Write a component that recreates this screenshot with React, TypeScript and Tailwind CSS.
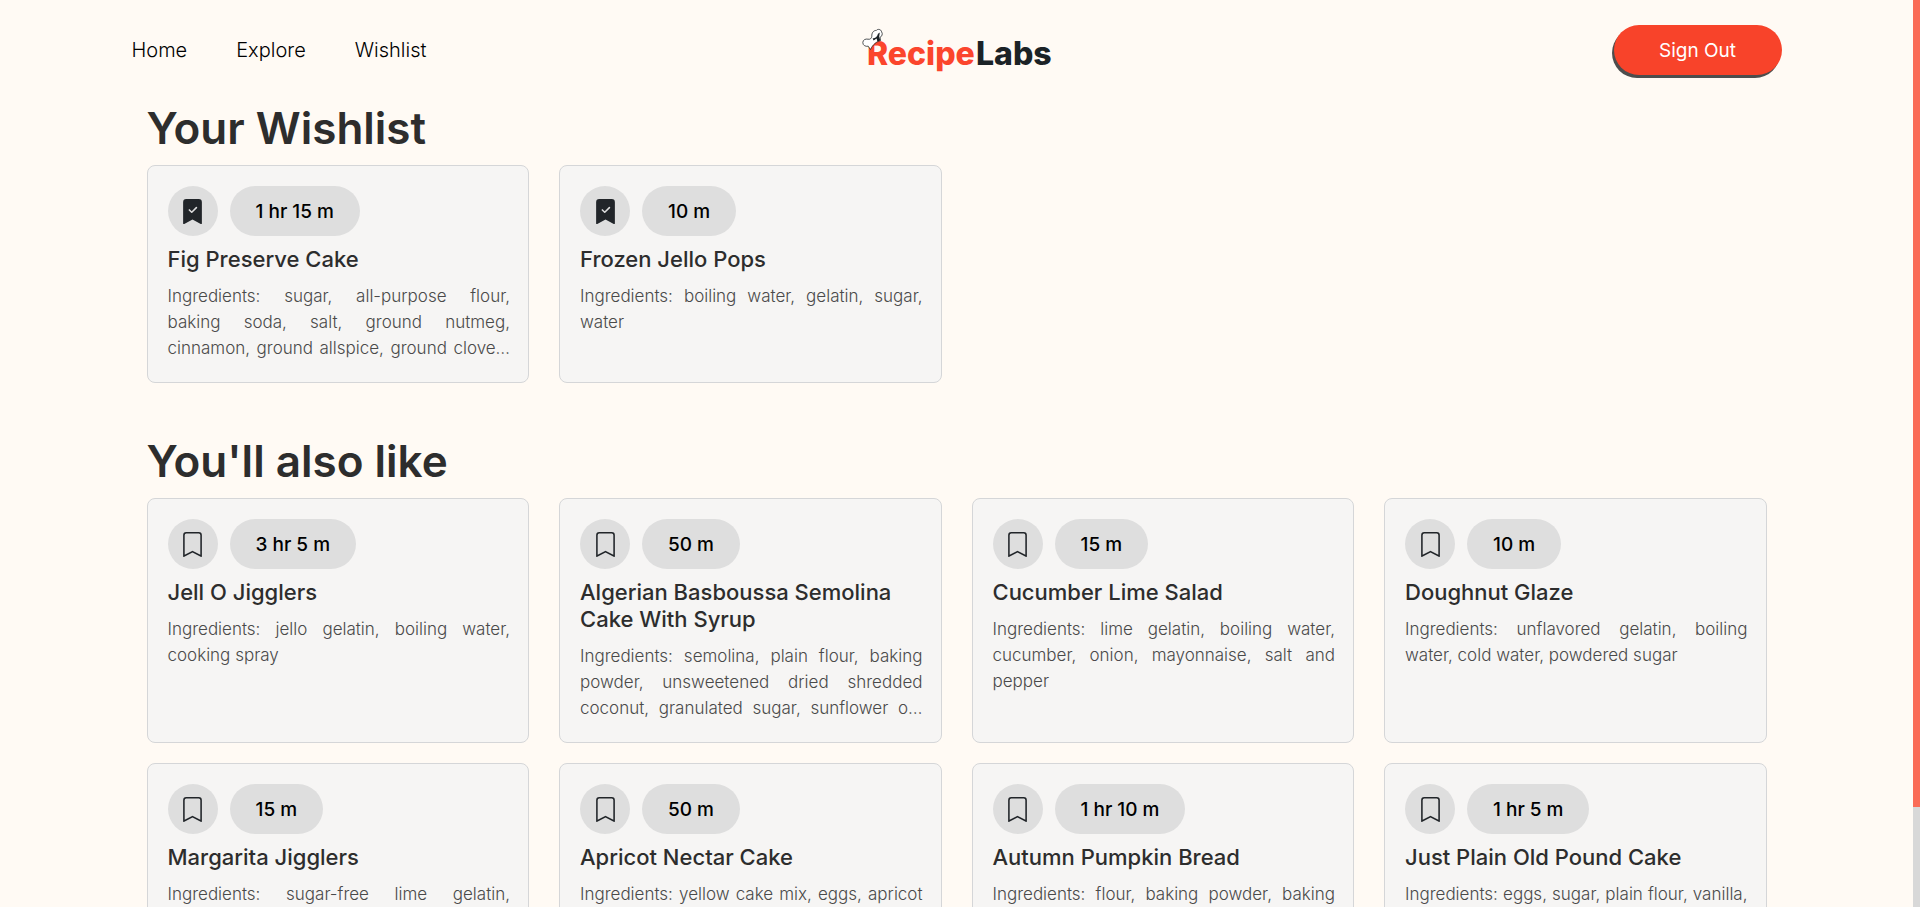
import { BsBookmark, BsBookmarkCheckFill } from "react-icons/bs";

type Recipe = { name: string; time: string; ingredients: string; truncated?: boolean };

const wishlist: Recipe[] = [
  {
    name: "Fig Preserve Cake",
    time: "1 hr 15 m",
    ingredients: "sugar, all-purpose flour, baking soda, salt, ground nutmeg, cinnamon, ground allspice, ground clove…",
    truncated: true,
  },
  { name: "Frozen Jello Pops", time: "10 m", ingredients: "boiling water, gelatin, sugar, water" },
];

const suggestions: Recipe[] = [
  { name: "Jell O Jigglers", time: "3 hr 5 m", ingredients: "jello gelatin, boiling water, cooking spray" },
  {
    name: "Algerian Basboussa Semolina Cake With Syrup",
    time: "50 m",
    ingredients:
      "semolina, plain flour, baking powder, unsweetened dried shredded coconut, granulated sugar, sunflower o…",
    truncated: true,
  },
  {
    name: "Cucumber Lime Salad",
    time: "15 m",
    ingredients: "lime gelatin, boiling water, cucumber, onion, mayonnaise, salt and pepper",
  },
  {
    name: "Doughnut Glaze",
    time: "10 m",
    ingredients: "unflavored gelatin, boiling water, cold water, powdered sugar",
  },
  { name: "Margarita Jigglers", time: "15 m", ingredients: "sugar-free lime gelatin, unflavored gelatin, water" },
  { name: "Apricot Nectar Cake", time: "50 m", ingredients: "yellow cake mix, eggs, apricot nectar, lemon gelatin" },
  {
    name: "Autumn Pumpkin Bread",
    time: "1 hr 10 m",
    ingredients: "flour, baking powder, baking soda, pumpkin, cinnamon",
  },
  {
    name: "Just Plain Old Pound Cake",
    time: "1 hr 5 m",
    ingredients: "eggs, sugar, plain flour, vanilla, butter, milk",
  },
];

function Logo() {
  return (
    <svg viewBox="0 0 192 50" className="h-[50px] w-[192px]" role="img" aria-label="RecipeLabs">
      <text x="6" y="40" fontSize="32" fontWeight="800" fill="#fb452c" className="font-['Inter',sans-serif]">
        Recipe
      </text>
      <text x="115" y="40" fontSize="32" fontWeight="800" fill="#1b2226" className="font-['Inter',sans-serif]">
        Labs
      </text>
      <path
        d="M9.5 24.5 7.2 21.2C4.6 21.8 1.8 20.4 1.8 17.6 1.8 14.8 4.6 13.6 7 14.2 9.2 14.6 10.4 13.6 10.8 11.4 10.6 7.6 12.6 5.4 15.4 5.4 16.4 3.8 20 4 20.6 6.8 22 9 21 11.4 19 12.4L19.6 15.6C16 16.2 11.6 19.6 9.5 24.5Z"
        fill="#ffffff"
        stroke="#262b2d"
        strokeWidth="0.8"
      />
      <path d="M11.6 13.6C14.4 13.4 16.2 11.6 17 8.8L18.8 7.6 18.2 11.6 19.2 15.4 16.4 16.4 15.6 13.6 12.6 15.6Z" fill="#1b2226" />
    </svg>
  );
}

function RecipeCard({ recipe, saved }: { recipe: Recipe; saved: boolean }) {
  return (
    <article className="rounded-lg border border-[#d5d6d8] bg-[#f6f5f4] p-5">
      <div className="flex gap-3">
        <button
          type="button"
          aria-label={saved ? "Remove from wishlist" : "Add to wishlist"}
          className="flex size-[50px] items-center justify-center rounded-full bg-[#dedede] text-[#212529]"
        >
          {saved ? <BsBookmarkCheckFill size={25} /> : <BsBookmark size={25} />}
        </button>
        <span className="flex h-[50px] items-center rounded-full bg-[#dedede] px-[26px] pt-0.5 text-[19px] font-medium text-black">
          {recipe.time}
        </span>
      </div>
      <h3 className="mt-2.5 text-[22px] leading-[27px] font-medium text-[#2d2d2d]">{recipe.name}</h3>
      <p
        className={`mt-2.5 -mr-0.5 mb-px text-justify text-[17px] leading-[26px] font-light text-[#4a4a4a] ${
          recipe.truncated ? "[text-align-last:justify]" : ""
        }`}
      >
        Ingredients: {recipe.ingredients}
      </p>
    </article>
  );
}

function RecipeSection({ title, recipes, saved }: { title: string; recipes: Recipe[]; saved: boolean }) {
  return (
    <section>
      <h2 className="mb-[9px] text-[44px] leading-[56px] font-semibold text-[#2d2d2d]">{title}</h2>
      <div className="grid grid-cols-4 gap-x-[30px] gap-y-5">
        {recipes.map((recipe) => (
          <RecipeCard key={recipe.name} recipe={recipe} saved={saved} />
        ))}
      </div>
    </section>
  );
}

export default function App() {
  return (
    <div className="flex h-screen overflow-hidden bg-[#fffaf4] font-['Inter',sans-serif]">
      <div className="flex-1 overflow-hidden">
        <header className="mx-auto grid max-w-[1650px] grid-cols-[1fr_auto_1fr] items-center py-[25px]">
          <nav className="flex gap-[49px] text-[20px] font-light text-black">
            <a href="#home">Home</a>
            <a href="#explore">Explore</a>
            <a href="#wishlist">Wishlist</a>
          </nav>
          <Logo />
          <button
            type="button"
            className="h-[50px] w-[168px] justify-self-end rounded-full bg-[#f8432a] pt-0.5 text-[19px] text-white shadow-[-2px_3px_0_#4d4d4d]"
          >
            Sign Out
          </button>
        </header>
        <main className="mx-auto flex max-w-[1620px] flex-col gap-[50px] pb-12">
          <RecipeSection title="Your Wishlist" recipes={wishlist} saved />
          <RecipeSection title="You'll also like" recipes={suggestions} saved={false} />
        </main>
      </div>
      <div className="h-full w-[7px] bg-[#d8d8d8]">
        <div className="h-[89%] bg-[#fa6b56]" />
      </div>
    </div>
  );
}
